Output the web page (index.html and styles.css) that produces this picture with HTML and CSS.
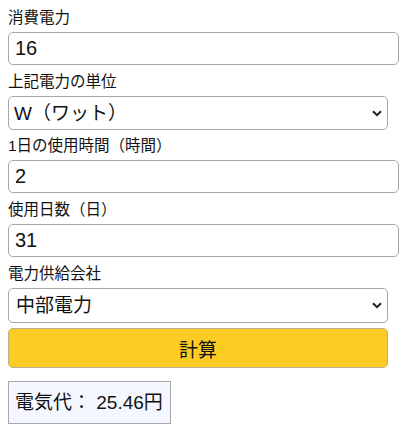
FILE: index.html
```html
<!DOCTYPE html>
<html lang="ja">
<head>
  <meta charset="UTF-8" />
  <meta name="viewport" content="width=device-width, initial-scale=1.0"/>
  <title>電気代計算</title>
  <link rel="stylesheet" href="styles.css">
</head>
<body>
  <form class="calc">
    <label for="watt">消費電力</label>
    <input type="text" id="watt" class="field" value="16">

    <label for="unit">上記電力の単位</label>
    <select id="unit" class="field pick">
      <option>W（ワット）</option>
      <option>kW（キロワット）</option>
    </select>

    <label for="hours">1日の使用時間（時間）</label>
    <input type="text" id="hours" class="field" value="2">

    <label for="days">使用日数（日）</label>
    <input type="text" id="days" class="field" value="31">

    <label for="company">電力供給会社</label>
    <select id="company" class="field pick pick-last">
      <option>中部電力</option>
      <option>東京電力</option>
      <option>関西電力</option>
    </select>

    <button type="button" class="calc-btn">計算</button>
  </form>

  <div class="result">電気代： 25.46円</div>
</body>
</html>
```

FILE: styles.css
```css
body {
  margin: 8px;
  font-family: "Liberation Sans", "Noto Sans CJK JP", sans-serif;
  color: #111;
  background: #fff;
}
.calc {
  display: flex;
  flex-direction: column;
  align-items: flex-start;
}
.calc label {
  font-size: 15.5px;
  line-height: 20px;
  margin-bottom: 4px;
}
.field {
  box-sizing: border-box;
  height: 33px;
  width: 391px;
  margin: 0 0 7px;
  padding: 0 6px;
  font-family: inherit;
  font-size: 20px;
  color: #111;
  background: #fff;
  border: 1px solid #a8a8a8;
  border-radius: 5px;
  outline: none;
}
.pick {
  appearance: none;
  -webkit-appearance: none;
  width: 380px;
  height: 34px;
  padding-left: 5px;
  margin-bottom: 6px;
  font-size: 19px;
  background-image: url("data:image/svg+xml,%3Csvg xmlns='http://www.w3.org/2000/svg' width='10' height='7' viewBox='0 0 10 7'%3E%3Cpath d='M1 1.2l4 4 4-4' fill='none' stroke='%23222' stroke-width='2'/%3E%3C/svg%3E");
  background-repeat: no-repeat;
  background-position: right 5px center;
}
.pick-last {
  height: 35px;
  margin-bottom: 5px;
  padding-left: 7px;
}
.calc-btn {
  width: 380px;
  height: 40px;
  font-family: inherit;
  font-size: 19px;
  color: #111;
  background: #fdcc24;
  border: 1px solid #b9b08c;
  border-radius: 5px;
  cursor: pointer;
}
.result {
  display: inline-block;
  margin-top: 13px;
  padding: 0 7px 0 6px;
  height: 41px;
  line-height: 41px;
  font-size: 19px;
  background: #f4f7ff;
  border: 1px solid #a8a8a8;
}
```
